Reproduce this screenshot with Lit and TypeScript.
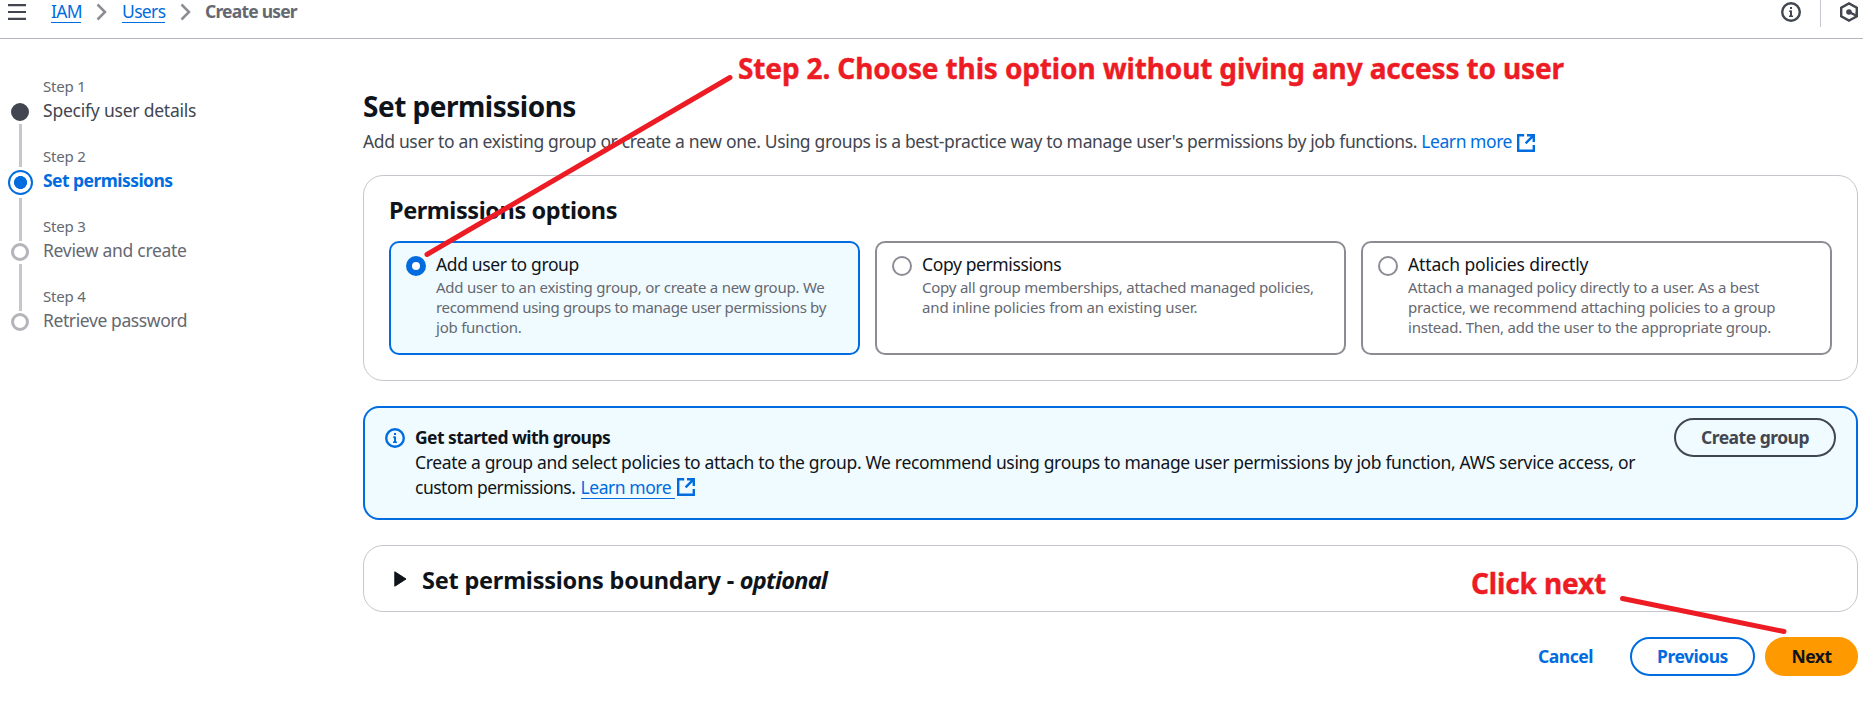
import { LitElement, html, svg, css } from "lit";

const external = svg`<g fill="none" stroke="currentColor" stroke-width="2.4"><path d="M7.2 1.2H1.2V16.8H16.8V11"/><path d="M10 1.2H16.8V8M16.3 1.7L8.6 9.4"/></g>`;
const info = svg`<circle cx="10" cy="10" r="8.8" fill="none" stroke="currentColor" stroke-width="2.4"/><path d="M9 5h2v2H9zM9 8.4h2V15H9z" fill="currentColor"/><path d="M8 8.4h2v1.4H8zM8 13.6h4V15H8z" fill="currentColor"/>`;

class PermOption extends LitElement {
  static properties = { label: {}, lines: { attribute: false }, selected: { type: Boolean, reflect: true } };
  declare label: string;
  declare lines: string[];
  declare selected: boolean;
  static styles = css`
    :host { display: flex; box-sizing: border-box; height: 114px; padding: 13px 14px 0 15px; gap: 10px; border: 2px solid #8c8c94; border-radius: 10px; background: #fff; }
    :host([selected]) { border-color: #006ce0; background: #f0fbff; }
    .radio { box-sizing: border-box; flex: none; width: 20px; height: 20px; border-radius: 50%; border: 2.5px solid #8c8c94; background: #fff; }
    :host([selected]) .radio { border: 6px solid #006ce0; }
    .label { font-size: 17.5px; line-height: 25px; letter-spacing: -0.38px; color: #0f141a; margin-top: -4px; white-space: nowrap; }
    .desc { font-size: 15px; line-height: 20px; letter-spacing: -0.23px; color: #656871; white-space: nowrap; }
    .desc .l1 { letter-spacing: -0.33px; }
    :host([label^="Copy"]) .l1 { letter-spacing: -0.14px; }
    :host([label^="Attach"]) .label { letter-spacing: -0.14px; }
    :host([label^="Attach"]) .l1 { letter-spacing: -0.2px; }
  `;
  render() {
    return html`<span class="radio"></span>
      <div><div class="label">${this.label}</div>
      <div class="desc">${this.lines.map((l, i) => html`<div class="l${i}"><span>${l}</span></div>`)}</div></div>`;
  }
}
customElements.define("perm-option", PermOption);

class AppRoot extends LitElement {
  static styles = css`
    :host { display: block; position: relative; width: 1863px; height: 706px; overflow: hidden; background: #fff; color: #0f141a; font-family: "Noto Sans", "Open Sans", sans-serif; font-size: 17.5px; line-height: 25px; letter-spacing: -0.34px; }
    svg { display: block; flex: none; }
    .top { display: flex; box-sizing: border-box; height: 39px; border-bottom: 1px solid #b4b4bb; padding-left: 8px; align-items: flex-start; }
    .menu { margin-top: 4px; color: #424650; }
    .crumbs { display: flex; margin-left: 25px; white-space: nowrap; }
    .crumbs a, .crumbs b { line-height: 23px; height: 23px; box-sizing: border-box; }
    .crumbs a { color: #006ce0; border-bottom: 1px solid #006ce0; }
    .iam { width: 30px; letter-spacing: -0.7px; }
    .users { width: 43px; letter-spacing: -0.65px; }
    .chev { margin: 3px 15px 0 15px; }
    .crumbs b { color: #656871; font-weight: 700; letter-spacing: -0.8px; margin-left: -1px; }
    .tools { display: flex; margin-left: auto; color: #424650; padding-right: 5px; }
    .tools .i { margin-top: 2px; }
    .bar { width: 1px; height: 27px; background: #c6c6cd; margin: 0 19px 0 19px; }
    .hex { margin-top: 2px; }
    .page { display: grid; grid-template-columns: 363px 1495px; }
    .steps { padding-top: 38px; }
    .step { display: grid; grid-template-columns: 41px 1fr; column-gap: 2px; height: 70px; white-space: nowrap; }
    .rail { display: flex; flex-direction: column; align-items: center; height: 70px; padding: 22px 1px 0 0; box-sizing: border-box; }
    .dot { box-sizing: border-box; width: 18px; height: 18px; border-radius: 50%; border: 3px solid #b4b4bb; margin-top: 4px; flex: none; }
    .done .dot { background: #424650; border-color: #424650; }
    .now .dot { width: 25px; height: 25px; border: 2.5px solid #006ce0; margin-top: 1px; background: radial-gradient(circle, #006ce0 6.2px, #fff 6.8px); }
    .line { width: 3px; height: 43px; background: #c6c6cd; margin-top: 3px; flex: none; }
    .rail .long { height: 47px; }
    .n { font-size: 15px; line-height: 20px; letter-spacing: -0.2px; color: #656871; margin-top: -1px; }
    .t { line-height: 27px; color: #656871; letter-spacing: -0.3px; margin-top: 1px; }
    .pass { letter-spacing: -0.4px; }
    .done .t { color: #424650; letter-spacing: -0.22px; }
    .now .t { color: #006ce0; font-weight: 700; letter-spacing: -0.55px; }
    h1, h2 { margin: 0; font-weight: 700; white-space: nowrap; }
    h1 { font-size: 28px; line-height: 40px; letter-spacing: -0.5px; margin-top: 47px; }
    .lead { display: flex; align-items: center; color: #424650; margin-top: 3px; height: 25px; white-space: nowrap; letter-spacing: -0.345px; }
    .lead svg { margin-top: 2px; color: #006ce0; }
    .blue { color: #006ce0; letter-spacing: -0.45px; }
    .lead .blue { width: 96px; }
    .box { box-sizing: border-box; border: 1px solid #c6c6cd; border-radius: 20px; }
    .options { margin-top: 21px; height: 206px; padding: 18px 25px 0; }
    h2 { font-size: 23.5px; line-height: 32px; letter-spacing: -0.42px; }
    .cards { display: grid; grid-template-columns: repeat(3, 471px); gap: 15px; margin-top: 15px; }
    .alert { display: flex; box-sizing: border-box; margin-top: 25px; height: 114px; border: 2px solid #006ce0; border-radius: 16px; background: #f0fbff; padding: 17px 20px 0; }
    .alert .i { color: #006ce0; margin: 3px 10px 0 0; }
    .alert b { letter-spacing: -0.56px; }
    .msg { white-space: nowrap; }
    .row { display: flex; }
    .row svg { margin: 3px 0 0 2px; color: #006ce0; }
    .custom { width: 165.5px; letter-spacing: -0.5px; }
    .under { border-bottom: 1px solid #006ce0; height: 23px; width: 94px; line-height: 25px; }
    .btn { box-sizing: border-box; height: 39px; border: 2px solid #006ce0; border-radius: 20px; color: #006ce0; font-weight: 700; letter-spacing: -0.5px; line-height: 34px; text-align: center; white-space: nowrap; }
    .create { width: 162px; margin: -7px 0 0 auto; color: #424650; border-color: #424650; }
    .expand { display: flex; align-items: center; margin-top: 25px; height: 67px; padding-left: 30px; gap: 15px; }
    .expand h2 { letter-spacing: -0.22px; padding-top: 2px; }
    .expand em { letter-spacing: -0.75px; }
    .actions { display: flex; justify-content: flex-end; margin-top: 25px; gap: 10px; }
    .cancel { width: 127px; border-color: transparent; padding-left: 18px; }
    .prev { width: 125px; }
    .next { width: 93px; background: #ff9900; border-color: #ff9900; color: #0f141a; }
    .marks { position: absolute; left: 0; top: 0; }
    .note { position: absolute; color: #ed1c24; font-size: 28px; line-height: 38px; font-weight: 700; white-space: nowrap; letter-spacing: -0.14px; -webkit-text-stroke: 0.4px #ed1c24; }
    .note1 { left: 738px; top: 49px; }
    .note2 { left: 1471px; top: 564px; letter-spacing: -0.15px; }
  `;
  step(n: number, t: string, c: string) {
    return html`<div class="step ${c}"><div class="rail"><span class="dot"></span>${n < 4 ? html`<span class="line ${n === 3 ? "long" : ""}"></span>` : ""}</div>
      <div><div class="n">Step ${n}</div><div class="t ${n === 4 ? "pass" : ""}">${t}</div></div></div>`;
  }
  render() {
    const chev = html`<svg class="chev" width="11" height="18" viewBox="0 0 11 18"><path d="M1.5 1.5L9 9L1.5 16.5" fill="none" stroke="#8c8c94" stroke-width="2.5"/></svg>`;
    const ext = html`<svg width="18" height="18" viewBox="0 0 18 18">${external}</svg>`;
    return html`
      <div class="top">
        <svg class="menu" width="18" height="16" viewBox="0 0 18 16"><path d="M0 1.2H18M0 8H18M0 14.8H18" stroke="currentColor" stroke-width="2.2"/></svg>
        <div class="crumbs"><a class="iam">IAM</a>${chev}<a class="users">Users</a>${chev}<b>Create user</b></div>
        <div class="tools"><svg class="i" width="20" height="20" viewBox="0 0 20 20">${info}</svg><span class="bar"></span>
          <svg class="hex" width="18" height="20" viewBox="0 0 18 20"><path d="M16.8 11.5V5.8L9 1.4L1.2 5.8V14.2L9 18.6L14.2 15.8" fill="none" stroke="currentColor" stroke-width="2.4"/><path d="M16.8 10V14.2L13.4 16.2" fill="none" stroke="currentColor" stroke-width="2.4"/><circle cx="9" cy="10" r="2.8" fill="currentColor"/><path d="M9 10L16.5 13.8" stroke="currentColor" stroke-width="2.4"/></svg></div>
      </div>
      <div class="page">
        <nav class="steps">
          ${this.step(1, "Specify user details", "done")}${this.step(2, "Set permissions", "now")}${this.step(3, "Review and create", "")}${this.step(4, "Retrieve password", "")}
        </nav>
        <main>
          <h1>Set permissions</h1>
          <div class="lead"><span>Add user to an existing group or create a new one. Using groups is a best-practice way to manage user's permissions by job functions.&nbsp;</span><span class="blue">Learn more</span>${ext}</div>
          <section class="box options">
            <h2>Permissions options</h2>
            <div class="cards">
              <perm-option selected label="Add user to group" .lines=${["Add user to an existing group, or create a new group. We", "recommend using groups to manage user permissions by", "job function."]}></perm-option>
              <perm-option label="Copy permissions" .lines=${["Copy all group memberships, attached managed policies,", "and inline policies from an existing user."]}></perm-option>
              <perm-option label="Attach policies directly" .lines=${["Attach a managed policy directly to a user. As a best", "practice, we recommend attaching policies to a group", "instead. Then, add the user to the appropriate group."]}></perm-option>
            </div>
          </section>
          <section class="alert">
            <svg class="i" width="20" height="20" viewBox="0 0 20 20">${info}</svg>
            <div class="msg"><b>Get started with groups</b>
              <div>Create a group and select policies to attach to the group. We recommend using groups to manage user permissions by job function, AWS service access, or</div>
              <div class="row"><span class="custom">custom permissions.</span><span class="blue under">Learn more</span>${ext}</div></div>
            <div class="btn create">Create group</div>
          </section>
          <section class="box expand"><svg width="13" height="16" viewBox="0 0 13 16"><path d="M.8 .8L12 8L.8 15.2Z" fill="#0f141a" stroke="#0f141a" stroke-linejoin="round"/></svg><h2>Set permissions boundary - <em>optional</em></h2></section>
          <div class="actions"><div class="btn cancel">Cancel</div><div class="btn prev">Previous</div><div class="btn next">Next</div></div>
        </main>
      </div>
      <svg class="marks" width="1863" height="706"><path d="M730 77.5L427 254.5M1622.5 598.5L1784 631.5" stroke="#ed1c24" stroke-width="5" stroke-linecap="round" fill="none"/></svg>
      <div class="note note1">Step 2. Choose this option without giving any access to user</div>
      <div class="note note2">Click next</div>
    `;
  }
}
customElements.define("app-root", AppRoot);
